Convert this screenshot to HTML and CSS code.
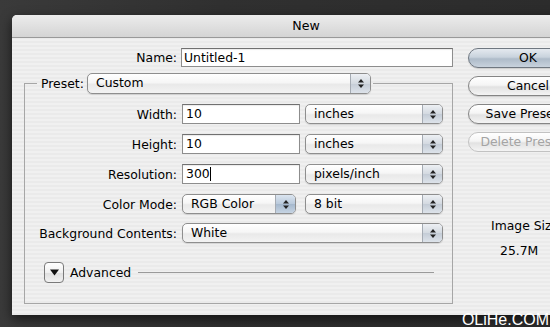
FILE: index.html
```html
<!DOCTYPE html>
<html lang="en">
<head>
  <meta charset="UTF-8" />
  <title>New</title>
  <link rel="stylesheet" href="styles.css">
</head>
<body>
  <div class="window">
    <div class="titlebar">New</div>

    <div class="content">
      <div class="main">
        <div class="row name-row">
          <label class="lbl">Name:</label>
          <div class="field name">Untitled-1</div>
        </div>

        <fieldset class="group">
          <legend class="preset">
            <span class="preset-lbl">Preset:</span>
            <div class="popup preset-pop">
              <span class="val">Custom</span>
              <span class="arrows"><svg width="6" height="11" viewBox="0 0 6 11"><polygon points="3,1 6,4.5 0,4.5"/><polygon points="0,6.5 6,6.5 3,10"/></svg></span>
            </div>
          </legend>

          <div class="row">
            <label class="lbl">Width:</label>
            <div class="field num">10</div>
            <div class="popup unit">
              <span class="val">inches</span>
              <span class="arrows"><svg width="6" height="11" viewBox="0 0 6 11"><polygon points="3,1 6,4.5 0,4.5"/><polygon points="0,6.5 6,6.5 3,10"/></svg></span>
            </div>
          </div>

          <div class="row">
            <label class="lbl">Height:</label>
            <div class="field num">10</div>
            <div class="popup unit">
              <span class="val">inches</span>
              <span class="arrows"><svg width="6" height="11" viewBox="0 0 6 11"><polygon points="3,1 6,4.5 0,4.5"/><polygon points="0,6.5 6,6.5 3,10"/></svg></span>
            </div>
          </div>

          <div class="row">
            <label class="lbl">Resolution:</label>
            <div class="field num">300<span class="caret"></span></div>
            <div class="popup unit">
              <span class="val">pixels/inch</span>
              <span class="arrows"><svg width="6" height="11" viewBox="0 0 6 11"><polygon points="3,1 6,4.5 0,4.5"/><polygon points="0,6.5 6,6.5 3,10"/></svg></span>
            </div>
          </div>

          <div class="row">
            <label class="lbl">Color Mode:</label>
            <div class="popup mode">
              <span class="val">RGB Color</span>
              <span class="arrows blue"><svg width="6" height="11" viewBox="0 0 6 11"><polygon points="3,1 6,4.5 0,4.5"/><polygon points="0,6.5 6,6.5 3,10"/></svg></span>
            </div>
            <div class="popup unit">
              <span class="val">8 bit</span>
              <span class="arrows"><svg width="6" height="11" viewBox="0 0 6 11"><polygon points="3,1 6,4.5 0,4.5"/><polygon points="0,6.5 6,6.5 3,10"/></svg></span>
            </div>
          </div>

          <div class="row last">
            <label class="lbl">Background Contents:</label>
            <div class="popup wide">
              <span class="val">White</span>
              <span class="arrows"><svg width="6" height="11" viewBox="0 0 6 11"><polygon points="3,1 6,4.5 0,4.5"/><polygon points="0,6.5 6,6.5 3,10"/></svg></span>
            </div>
          </div>

          <div class="advanced">
            <div class="disclosure"><svg width="9" height="7" viewBox="0 0 9 7"><polygon points="0,0.5 9,0.5 4.5,6.5"/></svg></div>
            <span>Advanced</span>
            <div class="rule"></div>
          </div>
        </fieldset>
      </div>

      <div class="side">
        <div class="btn default">OK</div>
        <div class="btn">Cancel</div>
        <div class="btn">Save Preset...</div>
        <div class="btn disabled">Delete Preset...</div>

        <div class="size">
          <div class="size-lbl">Image Size:</div>
          <div class="size-val">25.7M</div>
        </div>
      </div>
    </div>
  </div>

  <div class="watermark">OLiHe.COM</div>
</body>
</html>
```

FILE: styles.css
```css
body {
  margin: 0;
  width: 550px;
  height: 327px;
  overflow: hidden;
  position: relative;
  background: linear-gradient(90deg, #3a3a3a, #303030 40%, #2c2c2c);
  font-family: "DejaVu Sans", sans-serif;
  font-size: 12.4px;
  color: #000;
}

.window {
  margin: 15px 0 0 12px;
  width: 588px;
  height: 300px;
  border-radius: 5px 5px 0 0;
  overflow: hidden;
  background: repeating-linear-gradient(#f0f0f0 0 2px, #eaeaea 2px 4px);
  box-shadow: 0 4px 12px rgba(0, 0, 0, 0.6);
}

.titlebar {
  height: 22px;
  line-height: 22px;
  text-align: center;
  font-size: 12.6px;
  background: linear-gradient(#ececec, #d4d4d4);
  border-bottom: 1px solid #999;
}

.content {
  display: flex;
  gap: 15px;
  padding: 10px 0 0 12px;
}

.main {
  width: 429px;
}

.row {
  display: flex;
  align-items: center;
  height: 20px;
  margin-top: 10px;
}

.row.last {
  margin-top: 9px;
}

.lbl {
  width: 152px;
  margin-right: 5px;
  text-align: right;
  white-space: nowrap;
}

.name-row {
  margin-top: 0;
  height: 19px;
}

.name-row .lbl {
  width: 153px;
  margin-right: 4px;
}

.field {
  box-sizing: border-box;
  height: 20px;
  line-height: 18px;
  padding-left: 3px;
  background: #fff;
  border: 1px solid #8d8d8d;
  border-top-color: #707070;
  box-shadow: inset 0 1px 1px rgba(0, 0, 0, 0.08);
}

.field.name {
  width: 272px;
  height: 19px;
  line-height: 17px;
  padding-left: 2px;
}

.field.num {
  width: 118px;
}

.caret {
  display: inline-block;
  width: 0;
  height: 14px;
  border-left: 1px solid #000;
  vertical-align: -3px;
}

.group {
  box-sizing: border-box;
  width: 429px;
  min-width: 0;
  margin: 6px 0 0;
  padding: 10px 0 20px;
  border: 1px solid #a6a6a6;
}

.group > .row:first-of-type {
  margin-top: 0;
}

.preset {
  display: flex;
  align-items: center;
  margin-left: 12px;
  padding: 0 2px 0 4px;
}

.preset-lbl {
  width: 46px;
}

.popup {
  box-sizing: border-box;
  display: flex;
  height: 20px;
  border: 1px solid #8e8e8e;
  border-radius: 5px;
  overflow: hidden;
  background: linear-gradient(#ffffff, #f6f6f6 45%, #e9e9e9 55%, #f3f3f3);
  box-shadow: 0 1px 1px rgba(0, 0, 0, 0.12);
}

.popup .val {
  flex: 1;
  padding-left: 8px;
  line-height: 18px;
  white-space: nowrap;
}

.arrows {
  width: 19px;
  display: flex;
  align-items: center;
  justify-content: center;
  border-left: 1px solid #a5abb3;
  background: linear-gradient(#edf0f4, #d3d9e0 50%, #c4ccd6 51%, #dde3ea);
}

.arrows.blue {
  background: linear-gradient(#dbe5f0, #b9c9db 50%, #a5b8cd 51%, #c6d4e3);
}

.arrows svg {
  fill: #222;
}

.preset-pop {
  width: 284px;
  height: 21px;
}

.unit {
  width: 138px;
  margin-left: 5px;
}

.mode {
  width: 114px;
  margin-right: 4px;
}

.wide {
  width: 261px;
}

.advanced {
  display: flex;
  align-items: center;
  height: 21px;
  margin: 19px 18px 0 19px;
}

.disclosure {
  box-sizing: border-box;
  width: 20px;
  height: 21px;
  display: flex;
  align-items: center;
  justify-content: center;
  border: 1px solid #7a7a7a;
  border-radius: 4px;
  background: linear-gradient(#ffffff, #f0f0f0 50%, #dedede 51%, #f2f2f2);
}

.disclosure svg {
  fill: #111;
}

.advanced span {
  margin-left: 6px;
}

.rule {
  flex: 1;
  height: 1px;
  margin-left: 7px;
  background: #9a9a9a;
}

.side {
  display: flex;
  flex-direction: column;
  gap: 8px;
  width: 120px;
}

.btn {
  box-sizing: border-box;
  height: 20px;
  line-height: 18px;
  text-align: center;
  white-space: nowrap;
  border: 1px solid #858585;
  border-radius: 10px;
  background: linear-gradient(#ffffff, #f5f5f5 45%, #e2e2e2 55%, #f4f4f4);
  box-shadow: 0 1px 1px rgba(0, 0, 0, 0.15);
}

.btn.default {
  border-color: #6f7780;
  background: linear-gradient(#e4e9ef, #c9d3dd 45%, #aebbc9 55%, #c8d2dd);
}

.btn.disabled {
  color: #a4a4a4;
  border-color: #c2c2c2;
  box-shadow: none;
}

.size {
  margin-top: 58px;
  line-height: 16px;
}

.size-lbl {
  padding-left: 23px;
}

.size-val {
  padding-left: 32px;
  margin-top: 9px;
}

.watermark {
  position: absolute;
  top: 312px;
  right: 1px;
  font-family: "Liberation Sans", Arial, sans-serif;
  font-size: 16px;
  line-height: 16px;
  color: #fff;
}
```
